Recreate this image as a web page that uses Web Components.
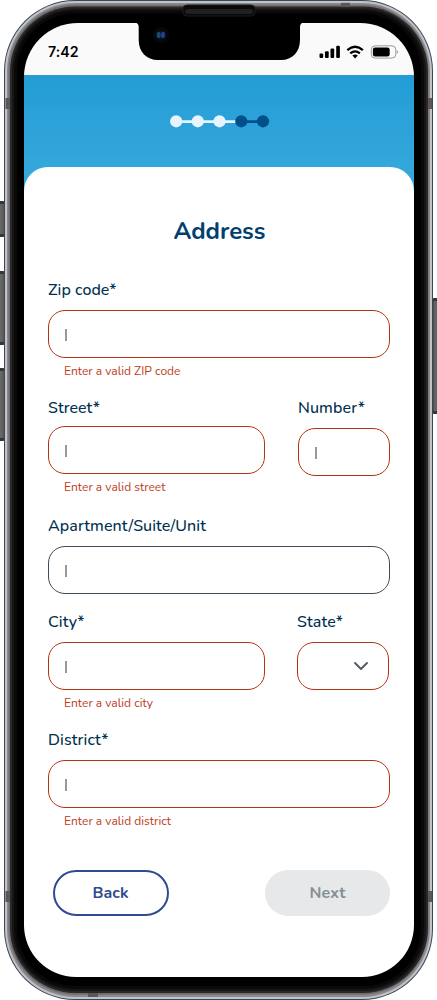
<!DOCTYPE html>
<html lang="en">
<head>
<meta charset="utf-8">
<title>Address</title>
<style>
html,body{margin:0;background:#fff}
body{width:437px;height:1000px;overflow:hidden;font-family:Nunito,Lato,"Noto Sans",sans-serif;color:#002f50}
.row{display:flex;gap:33px;height:118px}
.row.city{gap:32px}
.row fit-field:first-child{width:217px}
.row fit-field:last-child{width:92px}
.actions{display:flex;justify-content:space-between;margin-top:24px;padding-left:4.5px}
</style>
</head>
<body>
<phone-frame>
  <status-bar slot="status"></status-bar>
  <step-dots slot="hero"></step-dots>
  <form-title>Address</form-title>
  <fit-field label="Zip code*" lw="68.5" error="Enter a valid ZIP code" ew="116.5" invalid></fit-field>
  <div class="row">
    <fit-field label="Street*" lw="52" error="Enter a valid street" ew="101.5" invalid style="--gap:6px"></fit-field>
    <fit-field label="Number*" lw="67" invalid></fit-field>
  </div>
  <fit-field label="Apartment/Suite/Unit" lw="158" style="--h:96px"></fit-field>
  <div class="row city">
    <fit-field label="City*" lw="36.5" error="Enter a valid city" ew="89" invalid></fit-field>
    <fit-field label="State*" lw="46" invalid select></fit-field>
  </div>
  <fit-field label="District*" lw="60.5" error="Enter a valid district" ew="107" invalid></fit-field>
  <div class="actions">
    <pill-button w="36" kind="outline">Back</pill-button>
    <pill-button w="36" kind="disabled">Next</pill-button>
  </div>
</phone-frame>
<script>
function shadow(el, html){ el.attachShadow({mode:'open'}).innerHTML = html; return el.shadowRoot; }
// Tracks a piece of text so that its advance equals the given width.
function track(span, width){
  span.style.letterSpacing = '0px';
  const n = span.textContent.length, w = span.getBoundingClientRect().width;
  if (n && w) {
    const ls = (width - w) / n;
    span.style.letterSpacing = ls.toFixed(3) + 'px';
  }
}

customElements.define('phone-frame', class extends HTMLElement{
  connectedCallback(){
    const rings = [[4,0,429,1000,71,'#34485e'],[5,1,427,998,70,'#c3c2c4'],[7,3,423,994,68,'#8b898c'],[8.5,4.8,420,990,66.5,'#706d70'],[10,6.5,418,986.5,65,'#292829'],[12,8.5,414,982.5,63,'#161616'],[14,10.5,410,978.5,61,'#090909'],[17,13.5,404,972.5,58,'#000']]
      .map(r=>`<rect x="${r[0]}" y="${r[1]}" width="${r[2]}" height="${r[3]}" rx="${r[4]}" fill="${r[5]}"/>`).join('');
    const key = (x,y,h)=>`<rect x="${x}" y="${y}" width="8" height="${h}" rx="2" fill="#343536"/><rect x="${x+.5}" y="${y+3}" width="7" height="${h-6}" rx="1" fill="url(#key)"/>`;
    shadow(this, `<style>
      :host{display:block;position:relative;width:437px;height:1000px;box-sizing:border-box;padding:22.5px 23px 22.5px 24px}
      .body,.notch{position:absolute;left:0;top:0}
      .screen{position:relative;width:390px;height:954.5px;border-radius:54px 54px 52px 52px;overflow:hidden;background:linear-gradient(#239dd5,#38a9dc 115px);background-position:0 52.5px;background-repeat:no-repeat;background-size:100% 170px;display:flex;flex-direction:column}
      header{height:52.5px;background:#fafafa;flex:none}
      .hero{height:92px;flex:none}
      main{flex:1;background:#fff;border-radius:24px 24px 0 0;padding:0 24px}
      </style>
      <svg class="body" width="437" height="1000" viewBox="0 0 437 1000">
        <defs><linearGradient id="key"><stop offset="0" stop-color="#444546"/><stop offset=".4" stop-color="#686867"/><stop offset="1" stop-color="#555"/></linearGradient></defs>
        ${key(-3,201,36)}${key(-3,271,74)}${key(-3,368,73)}${key(432,298,116)}
        ${rings}
        <g fill="#5e5556"><rect x="5.500" y="98" width="4.500" height="11"/><rect x="428" y="98" width="4" height="11"/><rect x="5.500" y="891" width="4.500" height="11"/><rect x="428" y="891" width="4" height="11"/><rect x="341" y="2.800" width="9" height="4.200"/><rect x="88" y="993" width="10" height="4"/></g>
        <rect x="183" y="5" width="72" height="11" rx="4" fill="#090909" stroke="#1c1c1c"/>
        <rect x="185" y="9" width="68" height="5" rx="2.500" fill="#202020"/>
      </svg>
      <div class="screen"><header><slot name="status"></slot></header><div class="hero"><slot name="hero"></slot></div><main><slot></slot></main></div>
      <svg class="notch" width="437" height="70" viewBox="0 0 437 70">
        <path d="M135 22V22.500Q138.700 23 138.700 27V40C138.700 52 146.500 60 158 60H281C292.500 60 300 52 300 40V27Q300 23 303.500 22.500V22Z" fill="#000"/>
        <circle cx="161" cy="35" r="8" fill="#06080c"/><circle cx="161" cy="35" r="4.800" fill="#05111c"/>
        <ellipse cx="158.700" cy="35" rx="2" ry="3.200" fill="#174a6b"/><ellipse cx="163" cy="35" rx="2" ry="3.200" fill="#263d8e"/>
      </svg>`);
  }
});

customElements.define('status-bar', class extends HTMLElement{
  connectedCallback(){
    const r = shadow(this, `<style>
      :host{display:flex;justify-content:space-between;align-items:flex-start;padding:19.5px 16px 0 24px;color:#000}
      span{font:600 14.200px/20px Inter,sans-serif;white-space:nowrap}svg{display:block;margin-top:.5px}</style>
      <span>7:42</span>
      <svg width="79" height="18" viewBox="319 42.500 79 18">
        <rect x="319.500" y="53" width="3.700" height="4.500" rx="1.100"/><rect x="325" y="50.700" width="3.700" height="6.800" rx="1.100"/><rect x="330.500" y="48" width="3.700" height="9.500" rx="1.100"/><rect x="336.200" y="45.300" width="3.700" height="12.200" rx="1.100"/>
        <g fill="none" stroke="#000" stroke-width="2.300"><path d="M347.300 49.600Q355.100 42.900 362.900 49.600"/><path d="M350.300 52.900Q355.100 48.900 359.900 52.900"/></g>
        <path d="M352.400 55.100Q355.100 53 357.800 55.100L355.100 57.900Z"/>
        <rect x="371.300" y="45.300" width="24.500" height="12.300" rx="3.800" fill="none" stroke="#000" stroke-opacity=".38"/>
        <rect x="372.900" y="47" width="16.800" height="9" rx="2.200"/><path d="M396.800 49.700Q398 50.500 398 51.500T396.800 53.300Z" opacity=".4"/>
      </svg>`);
    track(r.querySelector('span'), 30.500);
  }
});

customElements.define('step-dots', class extends HTMLElement{
  connectedCallback(){
    shadow(this, `<style>:host{display:flex;justify-content:center;padding:40px 0 0 2px}svg{display:block}</style>
      <svg width="100" height="13" viewBox="0 0 100 13"><g fill="#e6f5fd"><path d="M6 5.200H71V8H6Z"/><circle cx="6.200" cy="6.300" r="6.100"/><circle cx="27.800" cy="6.300" r="6.100"/><circle cx="49.500" cy="6.300" r="6.100"/></g><g fill="#00508c"><path d="M71 5.200H93V8H71Z"/><circle cx="71.300" cy="6.300" r="6.100"/><circle cx="93" cy="6.300" r="6.100"/></g></svg>`);
  }
});

customElements.define('form-title', class extends HTMLElement{
  connectedCallback(){
    const r = shadow(this, `<style>:host{display:block;height:111px;box-sizing:border-box;padding:48px 0 0 1px;text-align:center;color:#003f6e;font-weight:700;font-size:24px;line-height:32px}span{white-space:nowrap}</style><span></span>`);
    const s = r.querySelector('span'); s.textContent = this.textContent; track(s, 91.800);
  }
});

customElements.define('fit-field', class extends HTMLElement{
  connectedCallback(){
    const a = n => this.getAttribute(n);
    const r = shadow(this, `<style>
      :host{display:block;height:var(--h,118px);--c:#3d4c58;flex:none}
      :host([invalid]){--c:#b53215}
      label{display:block;font-size:16px;line-height:24px;font-weight:540;color:#002f50}
      span{white-space:nowrap}
      .box{box-sizing:border-box;height:48px;margin-top:var(--gap,8px);border:1px solid var(--c);border-radius:17px;display:flex;align-items:center;padding:1px 16px 0}
      .caret{width:2px;height:12px;background:#959b9d}
      .chev{margin:-2px 3px 0 auto}
      .err{font-size:12px;line-height:16px;padding:5px 0 0 16px;color:#bd3c20}</style>
      <label><span></span></label>
      <div class="box">${this.hasAttribute('select')
        ? '<svg class="chev" width="16" height="10" viewBox="0 0 16 10" fill="none" stroke="#505b61" stroke-width="1.900" stroke-linecap="round" stroke-linejoin="round"><path d="M2 2L8 8L14 2"/></svg>'
        : '<div class="caret"></div>'}</div>
      ${a('error') ? '<div class="err"><span></span></div>' : ''}`);
    const l = r.querySelector('label span'); l.textContent = a('label'); track(l, +a('lw'));
    const e = r.querySelector('.err span'); if (e) { e.textContent = a('error'); track(e, +a('ew')); }
  }
});

customElements.define('pill-button', class extends HTMLElement{
  connectedCallback(){
    const r = shadow(this, `<style>
      :host{display:flex;align-items:center;justify-content:center;box-sizing:border-box;height:46px;border-radius:23px;font-size:16px;font-weight:700;flex:none}
      :host([kind=outline]){width:116px;border:2px solid #2e4b91;color:#2e4b91}
      :host([kind=disabled]){width:125px;background:#e6e8ea;color:#849093}
      span{white-space:nowrap}</style><span></span>`);
    const s = r.querySelector('span'); s.textContent = this.textContent; track(s, +this.getAttribute('w'));
  }
});
</script>
</body>
</html>
